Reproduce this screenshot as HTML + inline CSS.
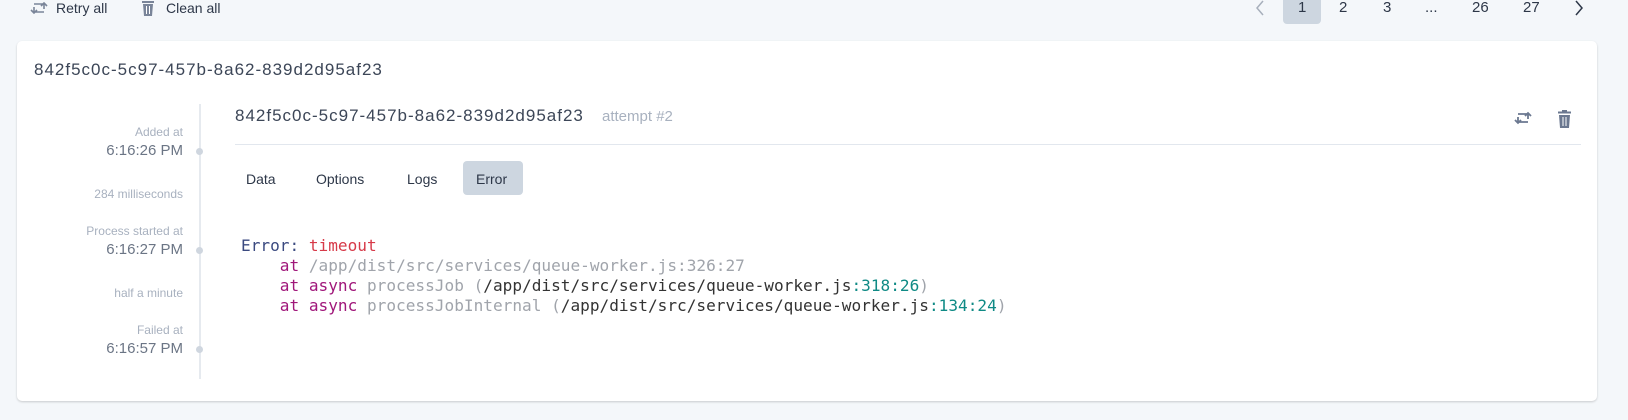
<!DOCTYPE html>
<html><head><meta charset="utf-8"><style>
*{box-sizing:border-box;margin:0;padding:0}
body{width:1628px;height:420px;background:#f4f7fa;font-family:"Liberation Sans",sans-serif;color:#3c4657;position:relative;overflow:hidden}
.abs{position:absolute;white-space:pre}
.top{font-size:14px;color:#2d3748}
.pg{font-size:15px;color:#2d3748;top:0;height:24px;line-height:16px}
.card{position:absolute;left:17px;top:41px;width:1580px;height:360px;background:#fff;border-radius:5px;box-shadow:0 1px 2px rgba(0,0,0,.18)}
.lbl{font-size:12px;color:#a8b1bf;text-align:right;right:1445px}
.tm{font-size:15px;color:#6b7585;text-align:right;right:1445px}
.dot{position:absolute;left:196px;width:7px;height:7px;border-radius:50%;background:#cfd6df}
.tab{font-size:14px;color:#2d3748}
.code{font-family:"DejaVu Sans Mono","Liberation Mono",monospace;font-size:16.1px;left:241px;color:#333}
.kw{color:#a0177a}.gr{color:#a0a4ab}.num{color:#0f8a85}
</style></head><body>
<svg class="abs" style="left:30px;top:1px" width="18" height="14" viewBox="0 0 18 14"><path d="M4 3h10v5M11 5l3-3 3 3M14 11H4V6M1 9l3 3 3-3" fill="none" stroke="#7a8599" stroke-width="1.6"/></svg>
<div class="abs top" style="left:56px;top:0">Retry all</div>
<svg class="abs" style="left:141px;top:0" width="14" height="16" viewBox="0 0 14 16"><rect x="1" y="1" width="12" height="2" fill="#7a8599"/><path d="M2 4h10l-1 12H3z" fill="#7a8599"/><path d="M5.5 6v8M8.5 6v8" stroke="#fff" stroke-width="1"/></svg>
<div class="abs top" style="left:166px;top:0">Clean all</div>

<svg class="abs" style="left:1255px;top:0" width="10" height="16" viewBox="0 0 10 16"><path d="M8 1L2 8l6 7" fill="none" stroke="#a7afbb" stroke-width="1.5"/></svg>
<div class="abs" style="left:1283px;top:0;width:38px;height:24px;background:#cdd6e0;border-radius:0 0 4px 4px"></div>
<div class="abs pg" style="left:1298px">1</div>
<div class="abs pg" style="left:1339px">2</div>
<div class="abs pg" style="left:1383px">3</div>
<div class="abs pg" style="left:1425px">...</div>
<div class="abs pg" style="left:1472px">26</div>
<div class="abs pg" style="left:1523px">27</div>
<svg class="abs" style="left:1574px;top:0" width="10" height="16" viewBox="0 0 10 16"><path d="M2 1l6 7-6 7" fill="none" stroke="#2d3748" stroke-width="1.5"/></svg>

<div class="card"></div>
<div class="abs" style="left:34px;top:60px;font-size:17px;color:#3c4657;letter-spacing:1px">842f5c0c-5c97-457b-8a62-839d2d95af23</div>

<div class="abs" style="left:199px;top:104px;width:2px;height:275px;background:#e6eaef"></div>
<div class="abs lbl" style="top:125px">Added at</div>
<div class="abs tm" style="top:142px">6:16:26 PM</div>
<div class="dot" style="top:148px"></div>
<div class="abs lbl" style="top:187px">284 milliseconds</div>
<div class="abs lbl" style="top:224px">Process started at</div>
<div class="abs tm" style="top:241px">6:16:27 PM</div>
<div class="dot" style="top:247px"></div>
<div class="abs lbl" style="top:286px">half a minute</div>
<div class="abs lbl" style="top:323px">Failed at</div>
<div class="abs tm" style="top:340px">6:16:57 PM</div>
<div class="dot" style="top:346px"></div>

<div class="abs" style="left:235px;top:106px;font-size:17px;color:#3c4657;letter-spacing:1px">842f5c0c-5c97-457b-8a62-839d2d95af23</div>
<div class="abs" style="left:602px;top:108px;font-size:15px;color:#a8b1bf">attempt #2</div>
<svg class="abs" style="left:1514px;top:111px" width="18" height="14" viewBox="0 0 18 14"><path d="M4 3h10v5M11 5l3-3 3 3M14 11H4V6M1 9l3 3 3-3" fill="none" stroke="#6b7890" stroke-width="1.8"/></svg>
<svg class="abs" style="left:1557px;top:110px" width="15" height="18" viewBox="0 0 15 18"><rect x="1" y="1.5" width="13" height="2" fill="#6b7890"/><rect x="5" y="0" width="5" height="2" fill="#6b7890"/><path d="M2 5h11l-1 13H3z" fill="#6b7890"/><path d="M6 7v9M9 7v9" stroke="#fff" stroke-width="1"/></svg>
<div class="abs" style="left:235px;top:144px;width:1346px;height:1px;background:#e2e7ee"></div>

<div class="abs tab" style="left:246px;top:171px">Data</div>
<div class="abs tab" style="left:316px;top:171px">Options</div>
<div class="abs tab" style="left:407px;top:171px">Logs</div>
<div class="abs" style="left:463px;top:161px;width:60px;height:34px;background:#cdd6e0;border-radius:4px"></div>
<div class="abs tab" style="left:476px;top:171px">Error</div>

<div class="abs code" style="top:236px"><span style="color:#3b4a80">Error:</span> <span style="color:#d73a49">timeout</span></div>
<div class="abs code" style="top:256px">    <span class="kw">at</span> <span class="gr">/app/dist/src/services/queue-worker.js:326:27</span></div>
<div class="abs code" style="top:276px">    <span class="kw">at async</span> <span class="gr">processJob (</span>/app/dist/src/services/queue-worker.js<span class="num">:318:26</span><span class="gr">)</span></div>
<div class="abs code" style="top:296px">    <span class="kw">at async</span> <span class="gr">processJobInternal (</span>/app/dist/src/services/queue-worker.js<span class="num">:134:24</span><span class="gr">)</span></div>
</body></html>
